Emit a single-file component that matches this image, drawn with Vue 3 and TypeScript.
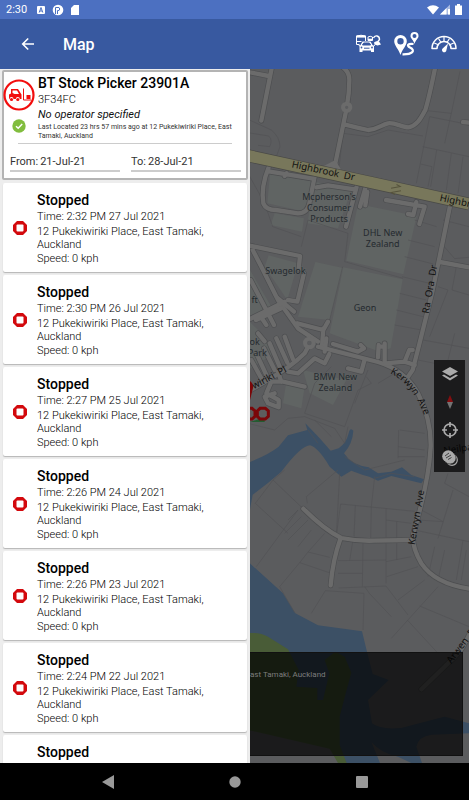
<script setup lang="ts">
import { ref } from 'vue'

interface Stop {
  id: number
  time: string
}

const from = ref('21-Jul-21')
const to = ref('28-Jul-21')
const address = '12 Pukekiwiriki Place, East Tamaki, Auckland'

const stops: Stop[] = [
  { id: 1, time: '2:32 PM 27 Jul 2021' },
  { id: 2, time: '2:30 PM 26 Jul 2021' },
  { id: 3, time: '2:27 PM 25 Jul 2021' },
  { id: 4, time: '2:26 PM 24 Jul 2021' },
  { id: 5, time: '2:26 PM 23 Jul 2021' },
  { id: 6, time: '2:24 PM 22 Jul 2021' },
  { id: 7, time: '2:22 PM 21 Jul 2021' },
]

const minorRoads: string[] = [
  'M0 216L62 228M72 200L40 362',
  'M282 200Q304 214 304 240Q304 280 296 324L262 490L268 520M292 374Q330 384 360 390C390 388 400 374 420 370S460 382 482 382C510 376 520 350 532 330Q544 290 562 200',
  'M663 368L645 366',
  'M62 502Q38 560 46 610Q54 630 84 630L150 640Q178 640 184 610L200 530M62 514L195 536M116 520L110 528',
  'M326 560L294 680M352 564L336 620M358 576L352 616M205 562L240 556L320 568',
  'M414 600L530 620L514 672M505 606L496 645L480 642',
  'M606 618L575 770L552 880L512 1040L494 1110L480 1130M576 786L663 802',
  'M0 736L156 768L152 806L168 820L148 905L120 900M14 750L40 800L90 900L150 985L210 1025',
  'M8 840L60 940M0 960L110 905M24 960L100 925M55 930L78 975M35 945L55 975M90 895L138 935',
  'M148 970L226 990L240 965M226 985L222 1040M30 1000L50 1024',
  'M210 1040L390 1086Q470 1110 510 1180Q550 1260 548 1340C544 1420 520 1520 496 1600Q490 1640 520 1690Q560 1750 663 1766',
  'M414 1090L470 1085L500 1095M470 1085L484 1050L494 1050M410 1082L410 1030M390 1072L392 1035M410 1040L394 1040',
  'M235 1015L230 1055M255 1032L330 1055L348 1045L338 1035M350 1078L340 1115L300 1105M244 1062L230 1090L200 1075L150 1120L120 1115',
  'M186 1030L170 1060Q130 1100 60 1140L0 1175M135 1078L110 1010M118 1088L85 1015M95 1100L65 1030M80 1110L48 1045M55 1125L25 1060M40 1135L10 1080',
  'M70 1145L105 1145L170 1160M100 1145L90 1115M70 1145L55 1180L92 1200L92 1222L60 1210L50 1190L80 1180',
  'M166 1526Q230 1590 280 1614Q330 1624 380 1622L490 1620M278 1614Q254 1680 248 1756',
  'M663 1905Q640 1960 600 1990L520 2068',
]

const parcels: string[] = [
  'M636 214L610 340L520 330M545 350L663 374M610 340L590 430M545 350L505 550M524 440L663 470M518 492L552 500L540 560M566 450L548 560M610 460L595 570M645 470L630 580M270 530L285 400L360 410L420 390L525 408',
  'M0 358L70 390Q95 410 96 440L85 470M0 398L62 408Q75 420 65 440L30 436',
  'M0 520L50 610L74 680L160 710M160 740L180 660L300 700M300 700L290 785L465 835M480 720L560 740M470 770L556 792M462 830L545 850M455 880L535 900M445 930L525 950M440 975L520 990M500 660L566 680M585 660L663 680M580 730L620 776L663 772M625 800L612 870L663 885M570 860L600 870L545 1010',
  'M245 960L284 800M170 1240L200 1150L250 1100M170 1240L290 1280L330 1170L370 1150L355 1130M320 1210L360 1110M390 1150L440 1120M455 1290L530 1300M450 1340L530 1350M450 1370L530 1370M452 1290L450 1375M525 1020L663 1045M510 1080L560 1090M620 1000L600 1080',
  'M0 1270L80 1290L120 1255L170 1250L260 1285L290 1330L300 1280M180 1290L210 1330M200 1260L250 1310M290 1370L350 1410L470 1380',
  'M22 1510L75 1440L180 1540M22 1510L120 1600M75 1440L110 1410M178 1510L175 1490L270 1410M120 1560L150 1530L25 1700M110 1600L160 1550M120 1620L180 1560M150 1640L190 1590M180 1656L230 1600M155 1688L180 1656L245 1672M155 1688L250 1720M155 1688L95 1760M95 1760L140 1838',
  'M278 1512L500 1534M322 1516L318 1610M370 1520L368 1616M414 1524L414 1612M414 1560L490 1570M446 1564L446 1615M380 1430L370 1520M278 1512L266 1600M345 1630L343 1760M414 1630L414 1750M314 1625L305 1682M270 1682L414 1680M270 1720L343 1720M414 1685L490 1670M446 1630L446 1680M272 1764L414 1758L480 1845M232 1772L348 1780L345 1890M232 1772L190 1840M350 1760L364 1780L430 1850M416 1730L510 1700M450 1800L530 1740M430 1915L570 1760M515 1818L663 1880M478 1860L570 1960',
  'M510 1560L586 1565M520 1530L586 1565M615 1470L570 1615M500 1590L663 1625M560 1640L540 1730M590 1650L570 1740M645 1620L625 1740M655 1650L640 1740M600 1420L590 1450L663 1490M500 1430L430 1420L380 1435M275 1420L265 1610',
]
</script>

<template>
  <div class="screen">
    <div class="status">
      <span class="clock">2:30</span>
      <svg class="status-left" viewBox="0 0 42 12" aria-hidden="true">
        <rect x="0" y="2" width="8" height="8" rx="1" fill="#fff" />
        <path d="M2.2 8.5L4 3.5L5.8 8.5M3 7H5" fill="none" stroke="#4c70c1" stroke-width="1" />
        <circle cx="21" cy="6" r="5.3" fill="#fff" />
        <path d="M18.500 10V3.500H22Q23.500 5 22 6.500H20.500V10" fill="#fff" stroke="#4c70c1" stroke-width="1" />
        <path d="M37 1H42V11H34V4Z" fill="#fff" />
      </svg>
      <svg class="status-right" viewBox="0 0 36 12" aria-hidden="true">
        <path d="M0 3.500Q6 -1 12 3.500L6 10.500Z" fill="#fff" />
        <path d="M13 10.500L23 .5V10.500Z" fill="#a9bae2" />
        <path d="M13 10.500L19.500 4V10.500ZM21 5H23V10.500H21Z" fill="#fff" />
        <path d="M28 1.500H30V0H33V1.500H35V11H28Z" fill="#fff" />
      </svg>
    </div>

    <header class="appbar">
      <button class="icon-button back" aria-label="Back">
        <svg width="14" height="14" viewBox="0 0 14 14" fill="none" stroke="#fff" stroke-width="1.6"><path d="M13 7H2M7.200 1.500L1.700 7L7.200 12.500" /></svg>
      </button>
      <h1>Map</h1>
      <nav class="actions">
        <button class="icon-button" aria-label="Vehicles">
          <svg width="26" height="20" viewBox="0 0 26 20" fill="none" stroke="#fff" stroke-width="1">
            <path d="M1.500 2Q6 .5 10.500 2V7M1.500 2V10.500H4.500M1.500 7.500H6.500" />
            <path d="M1.500 2.500H10.500" stroke-width="2.200" />
            <path d="M13 6.500V3Q15 1.500 17.500 3V6.500H13" />
            <path d="M13 5.500H17.500" stroke-width="1.600" />
            <path d="M18.500 4Q19.500 1.500 22 2Q24.500 2.500 24.500 5.500L23 7.500" stroke-width="1.400" />
            <path d="M19 8.500Q22 6 24 7.500L26 10.500L22.500 11.500L19.500 10.500Z" fill="#fff" stroke="none" />
            <path d="M5.500 11L7.500 7.500H15.500L17.500 11L19 12V18H16V16.500H7.500V18H4.500V12Z" fill="#fff" stroke="none" />
            <path d="M7.500 11L8.700 9H14.400L15.600 11ZM9 14.200H14.500" fill="#3859a0" stroke="#3859a0" />
            <circle cx="6.500" cy="13.500" r=".9" fill="#3859a0" stroke="none" /><circle cx="17" cy="13.500" r=".9" fill="#3859a0" stroke="none" />
            <path d="M5 12L3.500 11M18.500 12L20 11" />
          </svg>
        </button>
        <button class="icon-button" aria-label="Journeys">
          <svg width="26" height="26" viewBox="0 0 26 26">
            <path d="M7.500 4A6.300 6.300 0 0 0 1.200 10.300C1.200 14.500 5.500 18 7.500 24C9.500 18 13.800 14.500 13.800 10.300A6.300 6.300 0 0 0 7.500 4ZM7.500 7A3.200 3.200 0 1 1 7.500 13.400A3.200 3.200 0 0 1 7.500 7Z" fill="#fff" />
            <path d="M21.500 1A4 4 0 0 0 17.500 5C17.500 7.500 20.500 9 21.500 13C22.500 9 25.500 7.500 25.500 5A4 4 0 0 0 21.500 1ZM21.500 3A2 2 0 1 1 21.500 7A2 2 0 0 1 21.500 3Z" fill="#fff" />
            <path d="M20.500 13C14.500 12.500 13.500 14.500 17 16.500C23 19.500 19.500 23.500 9.500 23.300" fill="none" stroke="#fff" stroke-width="2.200" />
          </svg>
        </button>
        <button class="icon-button" aria-label="Speed">
          <svg width="26" height="18" viewBox="0 0 26 18" fill="none" stroke="#fff">
            <path d="M1 13.500A12 12 0 0 1 25 13.500L20 13.500A7 7 0 0 0 6 13.500Z" stroke-width="1.500" stroke-linejoin="round" />
            <path d="M3.200 8L8 10M7.500 3.500L10 7.500M13 1.500V6.500M18.500 3.500L16 7.500M22.800 8L18 10" stroke-width="1.200" />
            <path d="M17 8.500L15.400 15.200A2.200 2.200 0 1 1 11.600 13.600Z" fill="#fff" stroke="none" />
          </svg>
        </button>
      </nav>
    </header>

    <main class="body">
      <aside class="drawer">
        <section class="vehicle">
          <div class="summary">
            <div class="badges">
              <svg width="32" height="32" viewBox="0 0 32 32" aria-hidden="true">
                <circle cx="16" cy="16" r="14.500" fill="#fff" stroke="#f20d0d" stroke-width="2.200" />
                <path d="M6 20V15.500L8 14.500V10H15L18.500 15.500V20H16.800A2 2 0 0 0 12.800 20H10.500A2 2 0 0 0 6.500 20Z" fill="#f20d0d" />
                <path d="M9.500 11.500H14L16 15H11.500L9.500 14Z" fill="#fff" />
                <circle cx="8.500" cy="20.500" r="1.600" fill="#f20d0d" /><circle cx="14.800" cy="20.500" r="1.600" fill="#f20d0d" />
                <path d="M20.500 9.500V21H28" fill="none" stroke="#f20d0d" stroke-width="1" />
                <path d="M23.500 16H27.500V20H23.500Z" fill="#f20d0d" />
              </svg>
              <svg width="14" height="14" viewBox="0 0 14 14" aria-hidden="true">
                <circle cx="7" cy="7" r="6.700" fill="#81bd3e" />
                <path d="M4 7.200L6.200 9.300L10.200 5" fill="none" stroke="#fff" stroke-width="1.500" />
              </svg>
            </div>
            <div class="details">
              <h2>BT Stock Picker 23901A</h2>
              <p class="code">3F34FC</p>
              <p class="operator">No operator specified</p>
              <p class="located">Last Located 23 hrs 57 mins ago at 12 Pukekiwiriki Place, East Tamaki, Auckland</p>
            </div>
          </div>
          <hr />
          <form class="range" @submit.prevent>
            <div class="field"><label for="from">From:</label><input id="from" v-model="from" type="text" /></div>
            <div class="field"><label for="to">To:</label><input id="to" v-model="to" type="text" /></div>
          </form>
        </section>

        <ul class="stops">
          <li v-for="stop in stops" :key="stop.id" class="stop">
            <svg width="14" height="14" viewBox="0 0 14 14" aria-hidden="true">
              <path d="M4 0H10L14 4V10L10 14H4L0 10V4Z" fill="#d3090d" />
              <rect x="3.500" y="3.500" width="7" height="7" rx="1" fill="#fff" />
            </svg>
            <div class="info">
              <h3>Stopped</h3>
              <p>Time: {{ stop.time }}</p>
              <p class="address">{{ address }}</p>
              <p>Speed: 0 kph</p>
            </div>
          </li>
        </ul>
      </aside>

      <section class="map" aria-label="Map">
        <svg class="canvas" viewBox="6 207 657 2082" preserveAspectRatio="xMinYMin slice">
          <rect x="0" y="200" width="2000" height="2100" fill="#5b5c5e" />
          <g fill="#3c5065">
            <path d="M0 1388Q60 1365 92 1340L120 1306L178 1290L172 1270L215 1315L248 1352L272 1345Q295 1330 302 1300Q306 1280 316 1292Q314 1330 288 1360Q310 1395 362 1402L390 1420L430 1415L462 1402L490 1425L528 1438L520 1450L480 1440L430 1428L390 1442L364 1430L345 1425L310 1412L280 1430L245 1400Q210 1342 186 1336Q160 1336 100 1415Q60 1450 14 1484L0 1560Z" />
            <path d="M0 1685L105 1780L142 1840L210 1876L342 1894L358 1960L374 2022L422 2040L360 2100L372 2170Q395 2190 460 2184Q530 2165 590 2150L663 2170V2200L550 2204Q510 2210 505 2240L522 2289H0Z" />
          </g>
          <path d="M0 1900Q35 1895 60 1910L120 1948L152 2010L145 2060L208 2064V2100H225L244 2020L230 1980L262 1955L290 1970L310 2018Q290 2090 275 2150V2235L296 2289H0Z" fill="#495c37" />
          <path d="M0 2190L245 2246L270 2289H0ZM370 2226Q400 2260 450 2270L490 2289H396Z" fill="#5b5c5e" />
          <g fill="#606463">
            <path d="M66 520L195 545L170 635L58 610ZM80 640L168 655L162 695L68 675ZM200 545L310 570L270 685L178 670Z" />
            <path d="M330 612L506 648L466 823L295 782ZM202 786L285 804L245 960L150 950ZM286 802L464 838L428 1045L395 1055L245 1000Z" />
            <path d="M62 766L150 790L118 900L50 800ZM0 960L40 1000L80 1060L0 1110ZM165 1110L295 1140L255 1215L185 1180ZM115 1145L170 1160L160 1225L105 1210ZM0 800L70 920L0 950Z" />
          </g>
          <g class="parcels"><path v-for="line in parcels" :key="line" :d="line" /></g>
          <g class="casing"><path v-for="line in minorRoads" :key="line" :d="line" /></g>
          <g class="roads"><path v-for="line in minorRoads" :key="line" :d="line" /></g>
          <circle cx="296" cy="322" r="11" class="island" /><circle cx="184" cy="1029" r="13" class="island" />
          <path d="M220 502L262 480L280 510Z" fill="#6c6c6c" />
          <path d="M0 467L380 550L663 612" fill="none" stroke="#494946" stroke-width="38" />
          <path d="M0 467L380 550L663 612" fill="none" stroke="#78775b" stroke-width="34" />
          <path d="M430 562H458L448 554M458 575H428L438 583" fill="none" stroke="#56533c" stroke-width="3" transform="rotate(-10 444 568)" />
          <g class="road-label">
            <text transform="translate(130 502) rotate(12)">Highbrook&#160; Dr</text>
            <text transform="translate(574 602) rotate(12)">Highbrook Dr</text>
            <text transform="translate(542 942) rotate(-80)">Ra&#160; Ora&#160; Dr</text>
            <text transform="translate(500 1636) rotate(-80)">Kerwyn&#160; Ave</text>
            <text transform="translate(18 1168) rotate(-28)">wiriki&#160; Pl</text>
            <text transform="translate(610 1992) rotate(-53)">Arwen&#160; Pl</text>
            <path id="kerwyn" d="M426 1120Q494 1152 530 1250" fill="none" stroke="none" />
            <text><textPath href="#kerwyn">Kerwyn&#160; Ave</textPath></text>
            <text transform="translate(588 1362) rotate(-8)">Neilpark Dr</text>
          </g>
          <g class="place-label">
            <text x="243" y="600">Mcpherson's</text><text x="243" y="634">Consumer</text><text x="243" y="667">Products</text>
            <text x="404" y="707">DHL New</text><text x="404" y="740">Zealand</text>
            <text x="112" y="822">Swagelok</text><text x="351" y="934">Geon</text>
            <text x="20" y="910">ft</text><text x="20" y="1036">ok</text><text x="28" y="1068">Park</text>
            <text x="262" y="1141">BMW New</text><text x="262" y="1174">Zealand</text>
          </g>
          <path d="M0 1268L50 1252V1266H0Z" fill="#245b30" />
          <path d="M0 1140Q16 1146 15 1164L6 1200V1222H0Z" fill="#7a0709" />
          <g fill="#5d5d5d" stroke="#7a0709" stroke-width="9">
            <path d="M36 1225H52L61 1233V1249L52 1257H36L28 1249V1233ZM-4 1225H12L21 1233V1249L12 1257H-4Z" />
          </g>
        </svg>

        <div class="tools">
          <button class="icon-button" aria-label="Layers">
            <svg width="16" height="14" viewBox="0 0 16 14" fill="#aaa"><path d="M8 0L16 4.500L8 9L0 4.500ZM0 8.500L2 7.500L8 11L14 7.500L16 8.500L8 13.500Z" /></svg>
          </button>
          <button class="icon-button" aria-label="North">
            <svg width="6" height="14" viewBox="0 0 6 14"><path d="M3 0L6 7H0Z" fill="#850e10" /><path d="M3 14L6 7H0Z" fill="#747474" /></svg>
          </button>
          <button class="icon-button" aria-label="My location">
            <svg width="16" height="16" viewBox="0 0 16 16" fill="none" stroke="#aaa" stroke-width="1.700"><circle cx="8" cy="8" r="6" /><path d="M8 0V5M8 11V16M0 8H5M11 8H16" /></svg>
          </button>
          <button class="icon-button" aria-label="Cluster">
            <svg width="16" height="16" viewBox="0 0 16 16"><circle cx="10" cy="10" r="5.300" fill="none" stroke="#aaa" stroke-width="1.200" /><circle cx="8" cy="8" r="6" fill="#aaa" stroke="#222" stroke-width=".6" /><circle cx="6.200" cy="6.200" r="6" fill="#aaa" /><path d="M3 6L7 3M4 8L9 5M6 9.500L9.500 7.500" stroke="#333" stroke-width=".9" /></svg>
          </button>
        </div>
        <div class="caption">ast Tamaki, Auckland</div>
      </section>
    </main>

    <footer class="navbar">
      <button class="icon-button" aria-label="System back"><svg width="14" height="14" viewBox="0 0 14 14"><path d="M13 0V14L1 7Z" fill="#999" /></svg></button>
      <button class="icon-button" aria-label="Home"><svg width="12" height="12" viewBox="0 0 12 12"><circle cx="6" cy="6" r="5.700" fill="#999" /></svg></button>
      <button class="icon-button" aria-label="Recent apps"><svg width="12" height="12" viewBox="0 0 12 12"><rect width="12" height="12" rx="1" fill="#999" /></svg></button>
    </footer>
  </div>
</template>

<style>
body {
  margin: 0;
}
</style>

<style scoped>
* {
  box-sizing: border-box;
}
.screen {
  display: flex;
  flex-direction: column;
  height: 100vh;
  overflow: hidden;
  font-family: Roboto, 'Liberation Sans', sans-serif;
  color: #111;
}
h1,
h2,
h3,
p,
ul {
  margin: 0;
  padding: 0;
}
.icon-button {
  display: flex;
  align-items: center;
  justify-content: center;
  padding: 0;
  border: 0;
  background: none;
}
.status {
  display: flex;
  align-items: center;
  flex: none;
  height: 19px;
  padding: 0 6px;
  background: #4c70c1;
  color: #fff;
}
.clock {
  width: 31px;
  font-size: 11px;
}
.status-left {
  width: 42px;
  height: 12px;
}
.status-right {
  width: 36px;
  height: 12px;
  margin-left: auto;
}
.appbar {
  display: flex;
  align-items: center;
  flex: none;
  height: 50px;
  padding: 0 12px 0 21px;
  background: #3859a0;
  color: #fff;
}
.back {
  width: 14px;
}
h1 {
  margin-left: 28px;
  font-size: 16px;
  font-weight: 500;
}
.actions {
  display: flex;
  gap: 12px;
  margin-left: auto;
}
.body {
  display: flex;
  flex: 1;
  min-height: 0;
}
.drawer {
  display: flex;
  flex-direction: column;
  flex: none;
  width: 250px;
  padding: 1px 2px 0;
  background: #ededed;
}
.vehicle {
  flex: none;
  height: 110px;
  border: 2px solid #b4b4b4;
  border-radius: 2px;
  background: #fff;
}
.summary {
  display: flex;
}
.badges {
  display: flex;
  flex-direction: column;
  align-items: center;
  gap: 8px;
  flex: none;
  width: 34px;
  padding-top: 7px;
  margin-left: -2px;
}
.details {
  flex: 1;
  min-width: 0;
  padding: 1px 0 0 2px;
}
h2 {
  font-size: 14px;
  line-height: 20px;
  font-weight: 500;
  color: #000;
}
.code {
  font-size: 11px;
  line-height: 14px;
  font-weight: 300;
  color: #000;
}
.operator {
  font-size: 11px;
  line-height: 16px;
  font-style: italic;
}
.located {
  margin-right: -3px;
  font-size: 7px;
  line-height: 9px;
  color: #333;
}
hr {
  height: 1px;
  margin: 2px 14px 0;
  border: 0;
  background: #ccc;
}
.range {
  display: flex;
  gap: 11px;
  padding: 9px 5px 0 6px;
}
.field {
  display: flex;
  flex: 1;
  gap: 2px;
  min-width: 0;
  height: 19px;
  border-bottom: 2px solid #ccc;
  font-size: 11px;
  line-height: 18px;
  color: #333;
}
.field input {
  flex: 1;
  width: 0;
  padding: 0;
  border: 0;
  background: none;
  font: inherit;
  color: inherit;
}
.stops {
  display: flex;
  flex-direction: column;
  gap: 3px;
  flex: 1;
  min-height: 0;
  padding: 3px 1px 0;
  overflow-y: auto;
  scrollbar-width: none;
  list-style: none;
}
.stop {
  display: flex;
  align-items: center;
  gap: 10px;
  flex: none;
  height: 89px;
  padding-left: 10px;
  border-radius: 2px;
  background: #fff;
  box-shadow: 0 1px 1px #b5b5b5;
}
.stop svg {
  flex: none;
}
.info {
  padding: 2px 30px 0 0;
  font-size: 11px;
  line-height: 15px;
  font-weight: 300;
  color: #000;
}
h3 {
  font-size: 14px;
  line-height: 18px;
  font-weight: 500;
  color: #000;
}
.address {
  padding-top: 1px;
  line-height: 13px;
}
.map {
  position: relative;
  flex: 1;
  min-width: 0;
  overflow: hidden;
}
.canvas {
  display: block;
  width: 100%;
  height: 100%;
}
.parcels {
  fill: none;
  stroke: #515254;
  stroke-width: 2;
}
.casing,
.roads {
  fill: none;
  stroke-linecap: round;
  stroke-linejoin: round;
}
.casing {
  stroke: #4d4e50;
  stroke-width: 17;
}
.roads {
  stroke: #6b6b6b;
  stroke-width: 13;
}
.island {
  fill: #5b5c5e;
  stroke: #6b6b6b;
  stroke-width: 12;
}
.road-label,
.place-label {
  font-family: 'Noto Sans', sans-serif;
}
.road-label {
  font-size: 29px;
  fill: #111;
}
.place-label {
  font-size: 27px;
  fill: #252a2f;
  stroke: #606463;
  stroke-width: 3;
  paint-order: stroke;
  text-anchor: middle;
}
.tools {
  position: absolute;
  top: 291px;
  right: 4px;
  display: grid;
  grid-template-rows: repeat(4, 1fr);
  width: 31px;
  height: 112px;
  background: rgba(0, 0, 0, 0.7);
}
.caption {
  position: absolute;
  right: 6px;
  bottom: 7px;
  left: 0;
  height: 104px;
  padding-top: 16px;
  border: 1px solid #111;
  border-left: 0;
  background: rgba(0, 0, 0, 0.7);
  font-size: 8px;
  line-height: 12px;
  color: #7d7d7d;
}
.navbar {
  display: flex;
  align-items: center;
  justify-content: space-around;
  flex: none;
  height: 37px;
  padding: 0 44px;
  background: #000;
}
</style>
